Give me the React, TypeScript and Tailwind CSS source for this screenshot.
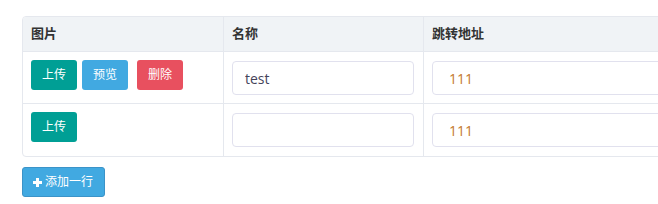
const rows = [
  { name: 'test', url: '111', uploaded: true },
  { name: '', url: '111', uploaded: false },
];

export default function App() {
  return (
    <div className="w-[658px] h-[204px] overflow-hidden bg-white pt-4 pl-[22px]" style={{ fontFamily: '"Open Sans", "Noto Sans CJK SC", sans-serif' }}>
      <div className="w-[720px] border border-[#e5e8ee] rounded-l-[4px] overflow-hidden">
        {/* Header */}
        <div className="flex h-[35px] bg-[#f0f3f6] border-b border-[#e5e8ee] text-[13px] font-bold text-[#333]">
          <div className="w-[201px] border-r border-[#e5e8ee] pl-[8px] flex items-center">图片</div>
          <div className="w-[200px] border-r border-[#e5e8ee] pl-[8px] flex items-center">名称</div>
          <div className="flex-1 pl-[8px] flex items-center">跳转地址</div>
        </div>

        {rows.map((row, i) => (
          <div key={i} className={`flex h-[52px] ${i < rows.length - 1 ? 'border-b border-[#e5e8ee]' : ''}`}>
            <div className="w-[201px] border-r border-[#e5e8ee] pl-[8px] pt-[8px] flex items-start">
              <button className="w-[46px] h-[30px] rounded-[3px] bg-[#009f95] text-white text-[12px]">上传</button>
              {row.uploaded && (
                <>
                  <button className="ml-[5px] w-[46px] h-[30px] rounded-[3px] bg-[#41a9e1] text-white text-[12px]">预览</button>
                  <button className="ml-[9px] w-[46px] h-[30px] rounded-[3px] bg-[#e8505f] text-white text-[12px]">删除</button>
                </>
              )}
            </div>
            <div className="w-[200px] border-r border-[#e5e8ee] pl-[8px] pt-[9px]">
              <input
                defaultValue={row.name}
                className="w-[182px] h-[34px] rounded-[4px] border border-[#e1e1ee] px-3 text-[14px] text-[#44445a] outline-none"
              />
            </div>
            <div className="flex-1 pl-[8px] pt-[9px]">
              <input
                defaultValue={row.url}
                className="w-[280px] h-[34px] rounded-[4px] border border-[#e1e1ee] pl-4 text-[14px] text-[#c4782c] outline-none"
              />
            </div>
          </div>
        ))}
      </div>

      <button className="mt-[10px] flex items-center gap-[3px] h-[30px] w-[83px] pl-[10px] rounded-[3px] bg-[#41a9e1] border border-[#3b93c8] text-white text-[12px]">
        <svg width="9" height="9" viewBox="0 0 9 9" fill="white">
          <rect x="3" y="0" width="3" height="9" />
          <rect x="0" y="3" width="9" height="3" />
        </svg>
        添加一行
      </button>
    </div>
  );
}
